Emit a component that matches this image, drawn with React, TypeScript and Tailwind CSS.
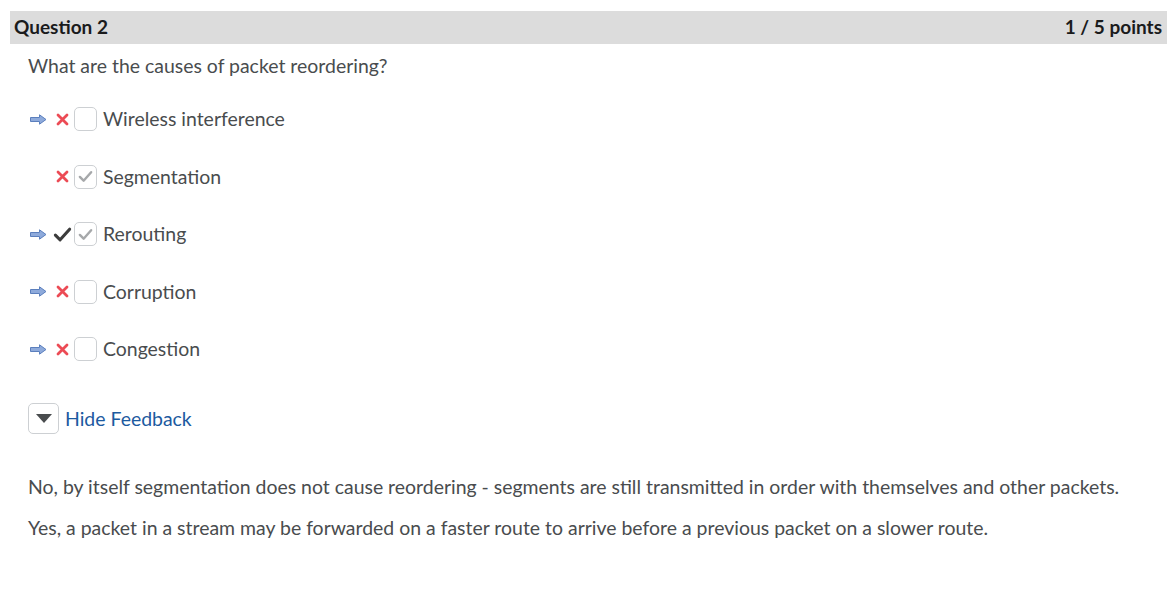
import { FC } from "react";

type Mark = "wrong" | "right" | "none";

const options: { label: string; arrow: boolean; mark: Mark; checked: boolean }[] = [
  { label: "Wireless interference", arrow: true, mark: "wrong", checked: false },
  { label: "Segmentation", arrow: false, mark: "wrong", checked: true },
  { label: "Rerouting", arrow: true, mark: "right", checked: true },
  { label: "Corruption", arrow: true, mark: "wrong", checked: false },
  { label: "Congestion", arrow: true, mark: "wrong", checked: false },
];

const Arrow: FC = () => (
  <svg width="17" height="11" viewBox="0 0 17 11">
    <path
      d="M0.5 3.5 H9.5 V0.8 L16 5.5 L9.5 10.2 V7.5 H0.5 Z"
      fill="#8eaadb"
      stroke="#5b7fbd"
      strokeWidth="1"
      strokeLinejoin="round"
    />
  </svg>
);

const Cross: FC = () => (
  <svg width="13" height="13" viewBox="0 0 13 13">
    <path d="M2 2 L11 11 M11 2 L2 11" stroke="#ec4b55" strokeWidth="2.8" strokeLinecap="round" />
  </svg>
);

const Tick: FC<{ color: string; size: number; width: number }> = ({ color, size, width }) => (
  <svg width={size} height={size} viewBox="0 0 16 16">
    <path d="M2 8.5 L6 12.5 L14 3.5" fill="none" stroke={color} strokeWidth={width} strokeLinecap="round" strokeLinejoin="round" />
  </svg>
);

const App: FC = () => {
  return (
    <div className="min-h-[597px] bg-white pt-[11px] pl-[10px] font-['Lato',sans-serif] text-[#494c4e]">
      <div className="flex h-[33px] items-center justify-between bg-[#dcdcdc] pl-1 pr-[5px] text-[19px] font-bold text-[#1a1b1c]">
        <span>Question 2</span>
        <span>1 / 5 points</span>
      </div>

      <div className="pl-[18px] text-[19.45px]">
        <p className="mt-[9px] leading-[26px]">What are the causes of packet reordering?</p>

        <div className="mt-[29px] flex flex-col gap-[35.5px]">
          {options.map((o) => (
            <div key={o.label} className="flex h-[22px] items-center">
              <span className="flex w-[22px] items-center pl-[2px]">{o.arrow && <Arrow />}</span>
              <span className="flex w-[24px] items-center justify-center">
                {o.mark === "wrong" && <Cross />}
                {o.mark === "right" && <Tick color="#3c3c3c" size={19} width={2.6} />}
              </span>
              <span className="flex h-[24px] w-[23px] items-center justify-center rounded-[5px] border border-[#cdd0d3] bg-white">
                {o.checked && <Tick color="#a6a8aa" size={15} width={2.6} />}
              </span>
              <span className="ml-[6px] leading-[22px]">{o.label}</span>
            </div>
          ))}
        </div>

        <div className="mt-[43px] flex items-center">
          <span className="flex h-[31px] w-[31px] items-center justify-center rounded-[5px] border border-[#cdd0d3]">
            <svg width="16" height="9" viewBox="0 0 16 9">
              <path d="M0 0 H16 L8 9 Z" fill="#494c4e" />
            </svg>
          </span>
          <span className="ml-[6px] text-[#1c5aa0]">Hide Feedback</span>
        </div>

        <p className="mt-[40px] leading-[26px]">
          No, by itself segmentation does not cause reordering - segments are still transmitted in order with themselves and other packets.
        </p>
        <p className="mt-[15px] leading-[26px]">
          Yes, a packet in a stream may be forwarded on a faster route to arrive before a previous packet on a slower route.
        </p>
      </div>
    </div>
  );
};

export default App;
